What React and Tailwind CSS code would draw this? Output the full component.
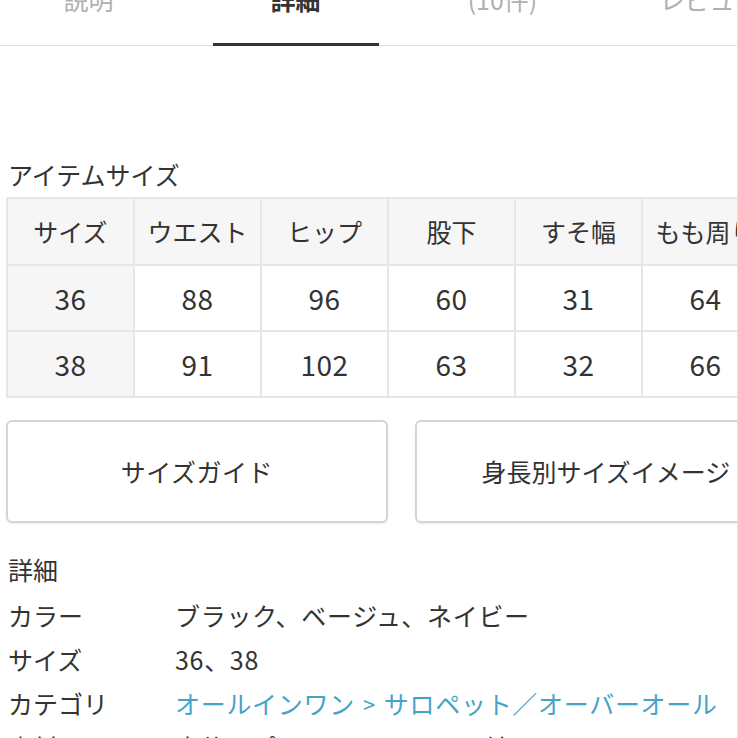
export default function App() {
  const tabs = [
    { label: "説明", active: false },
    { label: "詳細", active: true },
    { label: "(10件)", active: false },
    { label: "レビュー", active: false },
  ];
  const headers = ["サイズ", "ウエスト", "ヒップ", "股下", "すそ幅", "もも周り"];
  const rows = [
    ["36", "88", "96", "60", "31", "64"],
    ["38", "91", "102", "63", "32", "66"],
  ];
  const details = [
    ["カラー", "ブラック、ベージュ、ネイビー"],
    ["サイズ", "36、38"],
  ];
  return (
    <div
      className="w-[738px] h-[738px] overflow-hidden bg-white text-[#333] relative border-r border-[#e2e2e2]"
      style={{ fontFamily: '"Noto Sans CJK JP", "Noto Sans", sans-serif' }}
    >
      {/* tabs */}
      <div className="h-[46px] border-b border-[#e0e0e0] flex -ml-[15px] overflow-visible">
        {tabs.map((t, i) => (
          <div key={i} className="w-[207px] shrink-0 flex flex-col items-center justify-between">
            <div
              className={`-mt-[18px] text-[25px] leading-[34px] whitespace-nowrap ${
                t.active ? "text-[#333] font-semibold" : "text-[#b0b0b0]"
              }`}
            >
              {t.label}
            </div>
            {t.active ? (
              <div className="w-[166px] h-[3px] bg-[#333] -mb-[1px]" />
            ) : (
              <div className="h-[3px]" />
            )}
          </div>
        ))}
      </div>

      <div className="pl-[6px]">
        <div className="mt-[110px] pl-[2px] text-[25px] leading-[36px]">アイテムサイズ</div>

        <table className="mt-[5px] border-collapse table-fixed w-[764px]">
          <tbody>
            <tr className="h-[67px] bg-[#f6f6f6]">
              {headers.map((h, i) => (
                <td
                  key={i}
                  className="w-[127px] border-2 border-[#e6e6e6] text-center text-[25px] whitespace-nowrap overflow-hidden"
                >
                  {h}
                </td>
              ))}
            </tr>
            {rows.map((r, ri) => (
              <tr key={ri} className="h-[66px]">
                {r.map((c, ci) => (
                  <td
                    key={ci}
                    className={`border-2 border-[#e6e6e6] text-center text-[28px] tracking-[0.5px] ${
                      ci === 0 ? "bg-[#f6f6f6]" : "bg-white"
                    }`}
                  >
                    {c}
                  </td>
                ))}
              </tr>
            ))}
          </tbody>
        </table>

        <div className="mt-[22px] flex gap-[27px]">
          <div className="w-[382px] h-[103px] shrink-0 rounded-[6px] border-2 border-[#d4d4d4] shadow-[0_1px_2px_rgba(0,0,0,0.08)] flex items-center justify-center text-[25px] tracking-[0.5px]">
            サイズガイド
          </div>
          <div className="w-[382px] h-[103px] shrink-0 rounded-[6px] border-2 border-[#d4d4d4] shadow-[0_1px_2px_rgba(0,0,0,0.08)] flex items-center justify-center text-[25px] whitespace-nowrap">
            身長別サイズイメージ
          </div>
        </div>

        <div className="mt-[28px] pl-[2px] text-[25px] leading-[36px]">詳細</div>
        <div className="mt-[6px] flex flex-col">
          {details.map(([k, v], i) => (
            <div key={i} className="flex h-[44px] items-center text-[25px] leading-[36px] whitespace-nowrap">
              <div className="w-[169px] pl-[2px] shrink-0">{k}</div>
              <div className="tracking-[0.7px]">{v}</div>
            </div>
          ))}
          <div className="flex h-[44px] items-center text-[25px] leading-[36px] whitespace-nowrap">
            <div className="w-[169px] pl-[2px] shrink-0">カテゴリ</div>
            <div className="tracking-[0.7px] text-[#45a3c8] flex items-center">
              <span>オールインワン</span>
              <span className="mx-[8px] text-[22px]">&gt;</span>
              <span>サロペット／オーバーオール</span>
            </div>
          </div>
          <div className="flex h-[44px] items-center text-[25px] leading-[36px] whitespace-nowrap">
            <div className="w-[169px] pl-[2px] shrink-0">素材</div>
            <div className="tracking-[0.7px]">本体：ポリエステル70%、綿30%</div>
          </div>
        </div>
      </div>
    </div>
  );
}
